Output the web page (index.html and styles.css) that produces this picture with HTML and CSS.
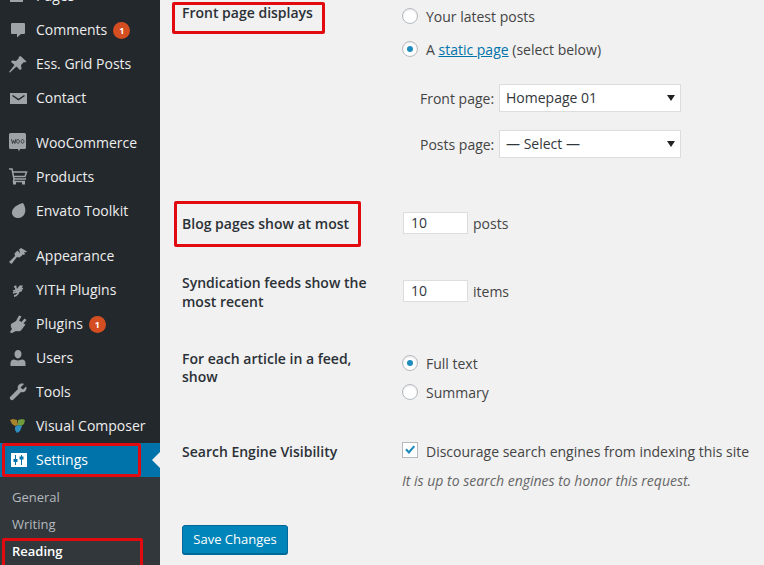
FILE: index.html
```html
<!DOCTYPE html>
<html lang="en">
<head>
    <meta charset="UTF-8">
    <title>Reading Settings</title>
    <link rel="stylesheet" href="styles.css">
</head>
<body>
<div id="wrap">
    <div id="sidebar">
        <ul class="menu">
            <li><svg class="ico" viewBox="0 0 20 20"><path d="M2 3h13v3H2zM2 8h16v3H2zM2 13h13v3H2z"/></svg>Pages</li>
            <li><svg class="ico" viewBox="0 0 20 20"><path d="M4 3h12a1 1 0 0 1 1 1v9a1 1 0 0 1-1 1h-3l-4 3.500V14H4a1 1 0 0 1-1-1V4a1 1 0 0 1 1-1z"/></svg>Comments<span class="badge">1</span></li>
            <li><svg class="ico" viewBox="0 0 20 20"><path d="M12.500 2l6 5.500-1.500 1-1-.5-3 3 .5 4-1.500 1-3.500-3.500L2 18.500l-1-.5 5.500-7L3 8l1-1.500 4 .5 3-3-.5-1z"/></svg>Ess. Grid Posts</li>
            <li class="sep"><svg class="ico" viewBox="0 0 20 20"><path d="M2 5h17v11H2z"/><path class="cut" d="M4.500 7.500l6 4 6-4"/></svg>Contact</li>
            <li><svg class="ico" viewBox="0 0 20 20"><path d="M2.500 0h14A1.500 1.500 0 0 1 18 1.500v13a1.500 1.500 0 0 1-1.500 1.500H12l-1 2.500L10 16H2.500A1.500 1.500 0 0 1 1 14.500v-13A1.500 1.500 0 0 1 2.500 0z"/><path class="woo" d="M3.500 6l1 4.500 1.200-3 1.200 3 1-4.500M10 6.500a1.400 1.900 0 1 0 .1 0zM14.500 6.500a1.400 1.900 0 1 0 .1 0z"/></svg>WooCommerce</li>
            <li><svg class="ico" viewBox="0 0 20 20"><path class="line" d="M1 2h3l2 10h12M4.600 5H18.500l-1.500 4.500H5.500M6 12l-.5 2.500H17"/><rect x="5" y="15" width="3" height="2.500"/><rect x="14" y="15" width="3" height="2.500"/></svg>Products</li>
            <li class="sep"><svg class="ico" viewBox="0 0 20 20"><path d="M15 2c2.500 3.500 3 8 1.500 11-1.500 3-4.500 4.500-7.500 4-3-.5-5.500-3-5-6.500C4.500 7 10 3 15 2z"/></svg>Envato Toolkit</li>
            <li><svg class="ico" viewBox="0 0 20 20"><path d="M11 3.500l2-1.500 6 3.500-1.500 1-1.500-.5 1 2-1 1-1.500-.5-.5 1-1 .5zM9.500 4.500l4.500 5-2.500 2-2.500-.5-5.500 7-2.500-2 6-6-.5-2.500z"/></svg>Appearance</li>
            <li><svg class="ico" viewBox="0 0 20 20"><path class="yith" d="M6 7l1.500-.5 1 4.500 3.500-4.500h1.500L9.500 14c-1 1.500-2 2-3.500 2M5 11l10-2.500M5 13l9-2.500"/></svg>YITH Plugins</li>
            <li><svg class="ico" viewBox="0 0 20 20"><path d="M11 1.500l2.500 1-2.500 4 2.500 1.500 3-3.500 2 1.500-3 3.500 2 1-4.500 6c-2 1-3.500 1-5 .5L4 19l-2-.5.500-1.500 1.500-2c-1-1.500-1.500-3-1-5l5-3z"/></svg>Plugins<span class="badge">1</span></li>
            <li><svg class="ico" viewBox="0 0 20 20"><path d="M10 2c2.200 0 3.500 1.700 3.500 4s-1.300 4.500-3.500 4.500S6.500 8.300 6.500 6 7.800 2 10 2z"/><path d="M2.500 18v-3c0-2 1.500-3.500 3.500-3.500 1 0 2 1 4 1s3-1 4-1c2 0 3.500 1.500 3.500 3.500v3z"/></svg>Users</li>
            <li><svg class="ico" viewBox="0 0 20 20"><path d="M14 1.500c-3 0-5 2.500-4 5.500l-7.500 7.500c-1 1-1 2 0 3s2 1 3 0L13 10c3 1 5.500-1 5.500-4 0-.5 0-1-.5-1.500L15 7.500l-2.500-2L16 2c-.5-.5-1-.5-2-.5z"/></svg>Tools</li>
            <li><svg class="ico" viewBox="0 0 20 20"><path fill="#a8842c" d="M2 4l3-1 4 1 1 5-3 1-3-2z"/><path fill="#6f9c3a" d="M10 4l4-1 3 1-1 4-3 2-3-1z"/><path fill="#2f8fbf" d="M7 11l3-2 4 1-2 5-3 2-2-3z"/></svg>Visual Composer</li>
            <li class="current hl-menu"><svg class="ico" viewBox="0 0 20 20"><path class="white" d="M3 3h16v14H3z"/><path class="blue" d="M7 5h1v4h1.500v3H8v3H7v-3H5.500V9H7zM13 5h1v1.500h1.500v3H14V15h-1V9.500h-1.500v-3H13z"/></svg>Settings</li>
        </ul>
        <ul class="submenu">
            <li>General</li>
            <li>Writing</li>
            <li class="active">Reading</li>
        </ul>
    </div>

    <form id="content">
        <div class="row row-front">
            <div class="th"><span class="hl hl-front">Front page displays</span></div>
            <div class="td">
                <div class="opt"><span class="radio"></span>Your latest posts</div>
                <div class="opt"><span class="radio on"></span>A&nbsp;<a href="#">static page</a>&nbsp;(select below)</div>
                <div class="pick"><label>Front page:</label><div class="select">Homepage 01</div></div>
                <div class="pick"><label>Posts page:</label><div class="select">— Select —</div></div>
            </div>
        </div>
        <div class="row row-blog">
            <div class="th"><span class="hl hl-blog">Blog pages show at most</span></div>
            <div class="td"><div class="inline"><div class="num">10</div>posts</div></div>
        </div>
        <div class="row row-feed">
            <div class="th">Syndication feeds show the most recent</div>
            <div class="td"><div class="inline"><div class="num">10</div>items</div></div>
        </div>
        <div class="row row-article">
            <div class="th">For each article in a feed, show</div>
            <div class="td">
                <div class="opt"><span class="radio on"></span>Full text</div>
                <div class="opt"><span class="radio"></span>Summary</div>
            </div>
        </div>
        <div class="row row-search">
            <div class="th">Search Engine Visibility</div>
            <div class="td">
                <div class="check-line"><span class="check"><svg viewBox="0 0 16 16"><path d="M2.500 8l1.800-1.700 2.400 2.500L12 2.800l1.800 1.500-7 8.200z"/></svg></span>Discourage search engines from indexing this site</div>
                <p class="desc">It is up to search engines to honor this request.</p>
            </div>
        </div>
        <div class="btn">Save Changes</div>
    </form>
</div>
</body>
</html>
```

FILE: styles.css
```css
html, body {
    margin: 0;
    height: 565px;
    overflow: hidden;
}
body {
    background: #f1f1f1;
    font-family: "Open Sans", "Liberation Sans", sans-serif;
    font-size: 14px;
    color: #444;
}
#wrap {
    display: flex;
    height: 565px;
    overflow: hidden;
}

/* sidebar */
#sidebar {
    width: 160px;
    flex: none;
    background: #23282d;
    color: #eee;
}
.menu, .submenu {
    list-style: none;
    margin: 0;
    padding: 0;
}
.menu {
    margin-top: -21px;
}
.menu li {
    display: flex;
    align-items: center;
    height: 34px;
    padding-left: 36px;
    position: relative;
    line-height: 18px;
}
.menu li.sep {
    margin-bottom: 11px;
}
.ico {
    position: absolute;
    left: 8px;
    top: 7px;
    width: 20px;
    height: 20px;
    fill: #9ea3a8;
}
.ico .cut {
    fill: none;
    stroke: #23282d;
    stroke-width: 1.500;
}
.ico .woo {
    fill: none;
    stroke: #23282d;
    stroke-width: .8;
}
.ico .line {
    fill: none;
    stroke: #9ea3a8;
    stroke-width: 1.500;
}
.ico .yith {
    fill: none;
    stroke: #9ea3a8;
    stroke-width: 1.800;
}
.ico .white {
    fill: #fff;
}
.ico .blue {
    fill: #0073aa;
}
.badge {
    width: 17px;
    height: 17px;
    border-radius: 50%;
    margin-left: 6px;
    background: #d54e21;
    color: #fff;
    font-size: 9px;
    font-weight: 700;
    line-height: 17px;
    text-align: center;
}
.menu li.current {
    background: #0073aa;
    color: #fff;
}
/* little arrow pointing into the page */
.menu li.current::after {
    content: "";
    position: absolute;
    right: 0;
    top: 9px;
    border: 8px solid transparent;
    border-right-color: #f1f1f1;
}
/* red marks drawn over the screenshot */
.hl-menu::before {
    content: "";
    position: absolute;
    left: 2px;
    top: 0;
    width: 139px;
    height: 34px;
    box-sizing: border-box;
    border: 3px solid #e00a0f;
    border-radius: 2px;
}
.submenu {
    background: #32373c;
    padding-top: 7px;
    height: 88px;
}
.submenu li {
    height: 27px;
    line-height: 27px;
    padding-left: 12px;
    font-size: 13px;
    color: #b4b9be;
}
.submenu li.active {
    color: #fff;
    font-weight: 600;
    position: relative;
}
.submenu li.active::before {
    content: "";
    position: absolute;
    left: 2px;
    top: 0;
    width: 141px;
    height: 30px;
    box-sizing: border-box;
    border: 3px solid #e00a0f;
    border-radius: 2px;
}

/* form */
#content {
    flex: 1;
    padding-left: 22px;
    min-width: 0;
}
.row {
    display: flex;
    align-items: flex-start;
}
.th {
    width: 220px;
    flex: none;
    box-sizing: border-box;
    padding-right: 20px;
    color: #2b3036;
    font-weight: 600;
    line-height: 19px;
}
.td {
    flex: 1;
    min-width: 0;
}
.inline {
    display: flex;
    align-items: center;
    height: 24px;
}
.hl {
    display: block;
    box-sizing: border-box;
    border: 3px solid #e00a0f;
    border-radius: 2px;
    white-space: nowrap;
}
.hl-front {
    width: 153px;
    height: 32px;
    margin-left: -10px;
    padding-left: 7px;
    line-height: 16px;
}
.hl-blog {
    width: 187px;
    height: 46px;
    margin-left: -8px;
    padding-left: 5px;
    line-height: 40px;
}
.opt {
    display: flex;
    align-items: center;
    height: 20px;
    margin-bottom: 13px;
}
.radio {
    width: 14px;
    height: 14px;
    flex: none;
    margin-right: 8px;
    border: 1px solid #b4b9be;
    border-radius: 50%;
    background: #fff;
    box-shadow: inset 0 1px 2px rgba(0,0,0,.1);
    display: flex;
    align-items: center;
    justify-content: center;
}
.radio.on::before {
    content: "";
    width: 6px;
    height: 6px;
    border-radius: 50%;
    background: #1e8cbe;
}
a {
    color: #0073aa;
}
.pick {
    display: flex;
    align-items: center;
    height: 28px;
    margin-left: 18px;
    margin-top: 18px;
}
.opt + .pick {
    margin-top: 25px;
}
.pick label {
    width: 79px;
}
.select {
    position: relative;
    width: 182px;
    height: 28px;
    box-sizing: border-box;
    border: 1px solid #ddd;
    background: #fff;
    padding-left: 6px;
    line-height: 26px;
    color: #32373c;
}
.select::after {
    content: "";
    position: absolute;
    right: 5px;
    top: 10px;
    border: 4px solid transparent;
    border-top: 6px solid #222;
    border-bottom: 0;
}
.num {
    width: 65px;
    height: 22px;
    box-sizing: border-box;
    border: 1px solid #ddd;
    background: #fff;
    padding-left: 7px;
    line-height: 20px;
    margin-right: 5px;
    margin-left: 1px;
    color: #32373c;
}

/* vertical rhythm of the rows */
.row-front {
    padding-top: 2px;
}
.row-front .td {
    padding-top: 4px;
}
.row-blog {
    margin-top: 43px;
}
.row-blog .td {
    padding-top: 10px;
}
.row-feed {
    margin-top: 26px;
}
.row-feed .td {
    padding-top: 6px;
}
.row-article {
    margin-top: 39px;
}
.row-article .th {
    line-height: 18px;
}
.row-article .td {
    padding-top: 3px;
}
.row-article .opt {
    margin-bottom: 9px;
}
.row-article .opt:last-child {
    margin-bottom: 0;
}
.row-search {
    margin-top: 40px;
}
.check-line {
    display: flex;
    align-items: center;
    height: 18px;
    white-space: nowrap;
}
.check {
    width: 14px;
    height: 14px;
    flex: none;
    margin-right: 8px;
    margin-top: -2px;
    border: 1px solid #b4b9be;
    background: #fff;
}
.check svg {
    display: block;
    width: 14px;
    height: 14px;
    fill: #1e8cbe;
}
.desc {
    margin: 12px 0 0;
    font-style: italic;
    line-height: 18px;
    color: #666;
}
.btn {
    width: 106px;
    height: 29px;
    margin-top: 35px;
    box-sizing: border-box;
    border: 1px solid #006799;
    border-radius: 3px;
    background: #0085ba;
    color: #fff;
    font-size: 13px;
    line-height: 27px;
    text-align: center;
    box-shadow: 0 1px 0 #006799;
}
```
